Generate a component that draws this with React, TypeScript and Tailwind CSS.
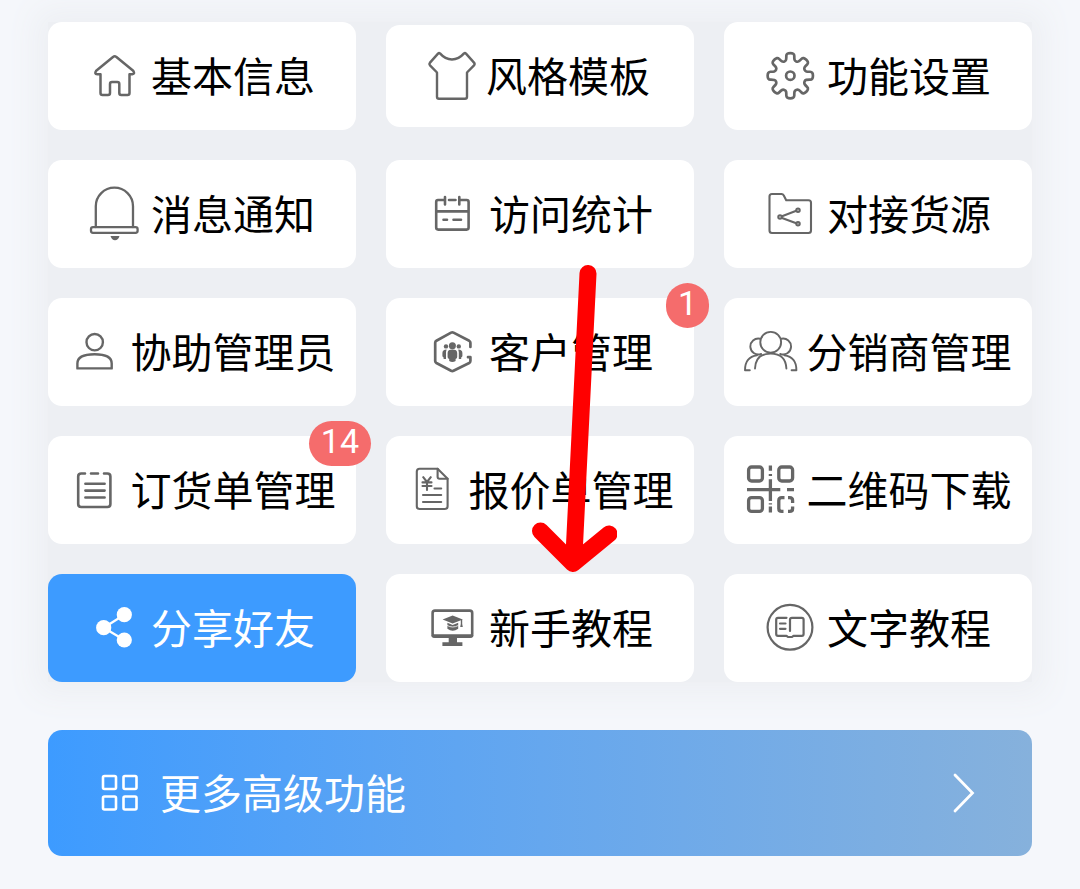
import type { ReactNode } from "react";

function Icon({ children, width = 2.5 }: { children: ReactNode; width?: number }) {
  return (
    <svg
      viewBox="0 0 52 52"
      className="size-[52px] shrink-0 overflow-visible"
      fill="none"
      stroke="currentColor"
      strokeWidth={width}
      strokeLinecap="round"
      strokeLinejoin="round"
      aria-hidden="true"
    >
      {children}
    </svg>
  );
}

function gearPath(cx: number, cy: number) {
  const points: [number, number][] = [];
  for (let i = 0; i < 8; i++) {
    const base = (i * Math.PI) / 4;
    const profile: [number, number][] = [
      [-17, 15.5],
      [-13, 17.5],
      [-10, 23],
      [10, 23],
      [13, 17.5],
      [17, 15.5],
    ];
    for (const [deg, r] of profile) {
      const a = base + (deg * Math.PI) / 180;
      points.push([cx + r * Math.sin(a), cy - r * Math.cos(a)]);
    }
  }
  const mid = (a: [number, number], b: [number, number]) =>
    `${((a[0] + b[0]) / 2).toFixed(2)} ${((a[1] + b[1]) / 2).toFixed(2)}`;
  let d = `M${mid(points[points.length - 1], points[0])}`;
  points.forEach((p, i) => {
    d += ` Q${p[0].toFixed(2)} ${p[1].toFixed(2)} ${mid(p, points[(i + 1) % points.length])}`;
  });
  return d + " Z";
}

const HomeIcon = () => (
  <Icon>
    <path d="M24.3 6.8 Q25.7 5.6 27.1 6.8 L44.2 20.8 Q46.3 24 43.3 24.3 H40.5 V43 Q40.5 45 38.5 45 H32.3 Q30.3 45 30.3 43 V34 Q30.3 32 28.3 32 H23 Q21 32 21 34 V43 Q21 45 19 45 H13.5 Q11.5 45 11.5 43 V24.3 H8.3 Q5 24 7.2 20.8 Z" />
  </Icon>
);

const ShirtIcon = () => (
  <Icon width={2.4}>
    <path d="M14 3.4 C18 8 21 9.5 26 9.5 S34 8 38 3.4 Q39 2.6 40 3.6 L48 12.6 Q49.2 14 48 15.4 L41 22.5 V46.8 Q41 48.8 39 48.8 H13 Q11 48.8 11 46.8 V22.5 L4 15.4 Q2.8 14 4 12.6 L12 3.6 Q13 2.6 14 3.4 Z" />
  </Icon>
);

const GearIcon = () => (
  <Icon width={2.7}>
    <path d={gearPath(25.3, 25.7)} />
    <circle cx="25.3" cy="25.7" r="4.2" />
  </Icon>
);

const BellIcon = () => (
  <Icon width={2.3}>
    <path d="M6.8 39 V18.3 A18.6 18.6 0 0 1 44 18.3 V39" />
    <rect x="2" y="39.2" width="46.6" height="5.6" rx="2" />
    <path d="M21.5 48 H30.5 Q29 52.3 26 52.3 Q23 52.3 21.5 48 Z" fill="currentColor" stroke="none" />
  </Icon>
);

const CalendarIcon = () => (
  <Icon width={2.6}>
    <path d="M18 12 H11 Q9.2 12 9.2 14 V39.6 Q9.2 41.6 11.2 41.6 H39.6 Q41.6 41.6 41.6 39.6 V14 Q41.6 12 39.6 12 H32.3 M22 12 H28.5 M9.2 23.4 H41.6 M18 9 V16.5 M32.3 9 V16.5 M16.5 31.7 H20 M26.5 31.7 H34" />
  </Icon>
);

const FolderShareIcon = () => (
  <Icon width={2.1}>
    <path d="M7 6 H16.5 Q18 6 18.8 7.5 L21.2 12.2 H43.5 Q46 12.2 46 14.7 V42.5 Q46 45 43.5 45 H7 Q4.5 45 4.5 42.5 V8.5 Q4.5 6 7 6 Z" />
    <path d="M17 28.2 L31.3 22.8 M17 30 L31.3 35.2" />
    <circle cx="15" cy="29" r="1.7" />
    <circle cx="33" cy="22.2" r="1.7" />
    <circle cx="33" cy="35.8" r="1.7" />
  </Icon>
);

const PersonIcon = () => (
  <Icon width={2.4}>
    <circle cx="25.7" cy="16.2" r="8.2" />
    <path d="M8.4 42.4 V37.5 C8.4 30.5 16 28.3 25.6 28.3 S42.7 30.5 42.7 37.5 V42.4 Z" />
  </Icon>
);

const CustomersIcon = () => (
  <Icon width={2.7}>
    <path d="M43.4 21 V16.8 Q43.4 15.5 42.2 14.8 L26.5 6.6 Q25.3 6 24.1 6.6 L9.4 14.8 Q8.2 15.5 8.2 16.8 V35 Q8.2 36.3 9.4 37 L24.1 44.8 Q25.3 45.4 26.5 44.8 L42.2 37 Q43.4 36.3 43.4 35 V31.2 H41" />
    <g fill="currentColor" stroke="none">
      <circle cx="25.4" cy="19.7" r="3.5" />
      <path d="M20.6 27 Q20.6 23.6 25.4 23.6 Q30.2 23.6 30.2 27 V31 Q30.2 32.4 28.6 33 V35 Q25.4 36.8 22.2 35 V33 Q20.6 32.4 20.6 31 Z" />
      <circle cx="19" cy="20.4" r="2.2" />
      <circle cx="31.8" cy="20.4" r="2.2" />
      <path d="M19.6 23.4 Q15.4 23.6 15.4 27 V30 Q15.4 31 16.6 31.4 V33 H19 V26 Z M31.2 23.4 Q35.4 23.6 35.4 27 V30 Q35.4 31 34.2 31.4 V33 H31.8 V26 Z" />
    </g>
  </Icon>
);

const DistributorsIcon = () => (
  <Icon width={1.9}>
    <circle cx="25.7" cy="16.3" r="10.4" />
    <path d="M15 12.7 A8 8 0 1 0 16.2 28 M36.4 12.7 A8 8 0 1 1 35.2 28" />
    <path d="M10 42.5 C10.5 32.5 16 27.6 25.7 27.6 S40.9 32.5 41.4 42.5" />
    <path d="M4.8 44.2 H0 C0 36 3.5 30.5 12 29.4 M46.6 44.2 H51.4 C51.4 36 47.9 30.5 39.4 29.4" />
  </Icon>
);

const OrderIcon = () => (
  <Icon width={2.6}>
    <path d="M16 9.5 H12.2 Q9.2 9.5 9.2 12.5 V40 Q9.2 43 12.2 43 H38.4 Q41.4 43 41.4 40 V12.5 Q41.4 9.5 38.4 9.5 H35 M22 9.5 H29 M16.4 19.7 H35.6 M16.4 26.6 H35.6 M16.4 33.5 H35.6" />
  </Icon>
);

const QuoteIcon = () => (
  <Icon width={2.1}>
    <path d="M30.6 4.8 H12.6 Q9.8 4.8 9.8 7.6 V42.2 Q9.8 45 12.6 45 H37.8 Q40.6 45 40.6 42.2 V14.8 Z" />
    <path d="M30.6 4.8 V12.8 Q30.6 14.8 32.6 14.8 H40.6" />
    <path d="M16.2 13.2 L20 18 L23.8 13.2 M20 18 V26 M15.5 18.4 H24.5 M15.5 22 H24.5 M27.5 24.5 H34.2 M16 31 H34.2 M16 38 H34.2" />
  </Icon>
);

const QrIcon = () => (
  <Icon width={3.3}>
    <rect x="3.6" y="3" width="13.8" height="14" rx="3" />
    <rect x="33.8" y="3" width="13.8" height="14" rx="3" />
    <rect x="3.6" y="33.6" width="13.8" height="13.8" rx="3" />
    <g strokeLinecap="butt">
      <path d="M2 25.7 H35.3 M25.4 15.3 V37 M42 25.7 H49 M25.4 1.5 V6.8 M25.4 10 V12 M25.4 42.5 V48.6" />
      <path d="M39.5 33.6 H36.8 Q33.8 33.6 33.8 36.6 V44.4 Q33.8 47.4 36.8 47.4 H38.5 M43 33.6 H44.6 Q47.6 33.6 47.6 36.6 V39 M47.6 42.5 V44.4 Q47.6 47.4 44.6 47.4 H43 M25.4 39.2 V40.6" />
    </g>
  </Icon>
);

const ShareIcon = () => (
  <Icon width={2.2}>
    <path d="M35.3 12.7 L14.7 25.7 L35.3 38" />
    <g fill="currentColor" stroke="none">
      <circle cx="35.3" cy="12.7" r="7.6" />
      <circle cx="14.7" cy="25.7" r="7.6" />
      <circle cx="35.3" cy="38" r="7.6" />
    </g>
  </Icon>
);

const MonitorIcon = () => (
  <Icon width={2.6}>
    <rect x="5.6" y="8.6" width="39.6" height="26" rx="2.4" />
    <path d="M6 33.8 H44.8" strokeWidth="3.2" />
    <g fill="currentColor" stroke="none">
      <path d="M21.7 35 H30 V40.3 H35.4 V44 H15.4 V40.3 H21.7 Z" />
      <path d="M25.6 13.6 L35.8 17.6 L25.6 21.6 L15.6 17.6 Z" />
      <path d="M20.4 20.8 L25.6 22.9 L31.2 20.8 V26.8 Q25.6 30.8 20.4 26.8 Z" />
      <path d="M33.8 17.6 H35.2 V22 L35.8 25 H33.2 L33.8 22 Z" />
    </g>
    <path d="M20.4 23.6 Q25.6 26.6 31.2 23.6" stroke="#ffffff" strokeWidth="0.8" />
  </Icon>
);

const BookIcon = () => (
  <Icon width={2.2}>
    <circle cx="25" cy="25.3" r="22.4" />
    <path d="M21.5 15.8 H13 Q11.2 15.8 11.2 17.6 V32 Q11.2 33.8 13 33.8 H21.5 L23 35 H27 L28.5 33.8 H36.8 Q38.6 33.8 38.6 32 V17.6 Q38.6 15.8 36.8 15.8 H27 Q25 15.8 25 17.6 V29" />
    <path d="M15 21.5 H20.5 M15 26.8 H20.5" />
  </Icon>
);

type Item = { label: string; icon: ReactNode; badge?: string; primary?: boolean; compact?: boolean };

const items: Item[] = [
  { label: "基本信息", icon: <HomeIcon /> },
  { label: "风格模板", icon: <ShirtIcon />, compact: true },
  { label: "功能设置", icon: <GearIcon /> },
  { label: "消息通知", icon: <BellIcon /> },
  { label: "访问统计", icon: <CalendarIcon /> },
  { label: "对接货源", icon: <FolderShareIcon /> },
  { label: "协助管理员", icon: <PersonIcon /> },
  { label: "客户管理", icon: <CustomersIcon />, badge: "1" },
  { label: "分销商管理", icon: <DistributorsIcon /> },
  { label: "订货单管理", icon: <OrderIcon />, badge: "14" },
  { label: "报价单管理", icon: <QuoteIcon /> },
  { label: "二维码下载", icon: <QrIcon /> },
  { label: "分享好友", icon: <ShareIcon />, primary: true },
  { label: "新手教程", icon: <MonitorIcon /> },
  { label: "文字教程", icon: <BookIcon /> },
];

function Tile({ item }: { item: Item }) {
  const tone = item.primary ? "bg-[#3d9bff] text-white" : "bg-white text-[#666666]";
  const size = item.compact ? "h-[102px] gap-2 pr-1" : "h-[108px] gap-[10px]";
  return (
    <button
      type="button"
      className={`relative flex items-center justify-center self-center rounded-[14px] ${tone} ${size}`}
    >
      {item.icon}
      <span className={`pb-1 whitespace-nowrap text-[41px] leading-[56px] ${item.primary ? "text-white" : "text-black"}`}>
        {item.label}
      </span>
      {item.badge && (
        <span className="absolute -top-[15px] -right-[15px] flex h-[45px] min-w-[43px] items-center justify-center rounded-full bg-[#f56c6c] px-3 pb-1 font-['Roboto',sans-serif] text-[34px] leading-[41px] text-white">
          {item.badge}
        </span>
      )}
    </button>
  );
}

export default function App() {
  return (
    <main className="min-h-screen bg-[#f5f7fb] px-12 pt-[22px] pb-[34px] font-['Noto_Sans_CJK_SC','Noto_Sans',sans-serif] font-normal">
      <section className="relative grid grid-cols-3 gap-[30px] bg-[#edeff3] shadow-[0_0_30px_12px_#edeff3]">
        {items.map((item) => (
          <Tile key={item.label} item={item} />
        ))}
        <svg
          viewBox="0 0 86 308"
          className="pointer-events-none absolute top-[243px] left-1/2 ml-[-9px] h-[308px] w-[86px]"
          fill="none"
          stroke="#ff0000"
          strokeWidth="17"
          strokeLinecap="round"
          strokeLinejoin="round"
          aria-hidden="true"
        >
          <path d="M57 8.5 L43 290 M9.5 266 L42 298.5 L78 269" />
        </svg>
      </section>

      <button
        type="button"
        className="relative mt-12 flex h-[126px] w-full items-center gap-5 rounded-[14px] bg-linear-to-r from-[#3d9bff] to-[#86b1dc] px-[52px] text-white"
      >
        <svg
          viewBox="0 0 40 40"
          className="size-10 shrink-0"
          fill="none"
          stroke="currentColor"
          strokeWidth="2.6"
          aria-hidden="true"
        >
          <rect x="3" y="3" width="13" height="13" rx="1.5" />
          <rect x="23.5" y="3" width="13" height="13" rx="1.5" />
          <rect x="3" y="23.5" width="13" height="13" rx="1.5" />
          <rect x="23.5" y="23.5" width="13" height="13" rx="1.5" />
        </svg>
        <span className="pb-1 text-[41px] leading-[56px]">更多高级功能</span>
        <svg
          viewBox="0 0 28 40"
          className="ml-auto h-10 w-7 shrink-0"
          fill="none"
          stroke="currentColor"
          strokeWidth="2.8"
          strokeLinecap="round"
          aria-hidden="true"
        >
          <path d="M3 2 L20.5 20 L3 38" />
        </svg>
      </button>
    </main>
  );
}
